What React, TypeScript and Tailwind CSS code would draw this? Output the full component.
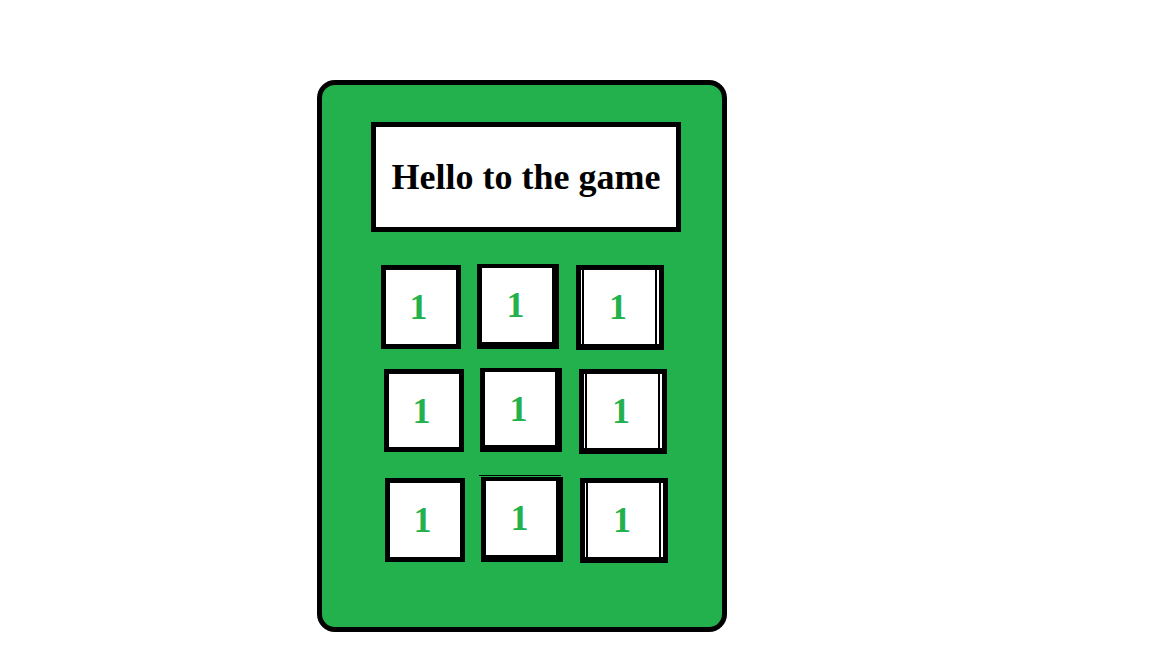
export default function App() {
  const digit = "font-['Liberation_Serif',serif] font-bold text-[36px] leading-none text-[#22b14c]";

  // plain tile, even border all round
  const Plain = ({ className = "" }: { className?: string }) => (
    <div className={`w-[80px] border-[5px] border-black bg-white flex items-center justify-center ${className}`}>
      <span className={`${digit} -ml-[5px]`}>1</span>
    </div>
  );

  // middle tile, heavier right and bottom edge
  const Heavy = ({ className = "" }: { className?: string }) => (
    <div className={`w-[82px] border-t-4 border-l-[5px] border-r-[7px] border-b-[7px] border-black bg-white flex items-center justify-center ${className}`}>
      <span className={`${digit} -ml-[3px]`}>1</span>
    </div>
  );

  // right tile, doubled side lines
  const Double = ({ className = "" }: { className?: string }) => (
    <div className={`w-[88px] border-[5px] border-b-[6px] border-black bg-white flex ${className}`}>
      <div className="flex-1 ml-[1px] mr-[2px] border-l-2 border-r-2 border-black flex items-center justify-center">
        <span className={`${digit} -ml-[3px]`}>1</span>
      </div>
    </div>
  );

  return (
    <div className="w-[1152px] h-[648px] bg-white overflow-hidden">
      <div className="ml-[317px] mt-[80px] w-[410px] h-[552px] border-[5px] border-black rounded-[18px] bg-[#22b14c] flex flex-col">
        {/* title box */}
        <div className="ml-[49px] mt-[37px] w-[310px] h-[110px] border-[5px] border-black bg-white flex items-center justify-center">
          <span className="font-['Liberation_Serif',serif] font-bold text-[36px] leading-none text-black">
            Hello to the game
          </span>
        </div>

        {/* row 1 */}
        <div className="flex items-start mt-[32px] ml-[59px]">
          <Plain className="h-[84px] mt-[1px]" />
          <Heavy className="h-[85px] ml-[16px]" />
          <Double className="h-[85px] ml-[17px] mt-[1px]" />
        </div>

        {/* row 2 */}
        <div className="flex items-start mt-[18px] ml-[62px]">
          <Plain className="h-[83px] mt-[1px]" />
          <Heavy className="h-[84px] ml-[16px]" />
          <Double className="h-[85px] ml-[17px] mt-[1px]" />
        </div>

        {/* row 3 */}
        <div className="flex items-start mt-[21px] ml-[63px]">
          <Plain className="h-[84px] mt-[3px]" />
          <div className="flex flex-col ml-[16px]">
            <div className="h-[1px] w-[82px] bg-black mb-[1px] -ml-[2px]" />
            <Heavy className="h-[85px]" />
          </div>
          <Double className="h-[85px] ml-[17px] mt-[3px]" />
        </div>
      </div>
    </div>
  );
}
